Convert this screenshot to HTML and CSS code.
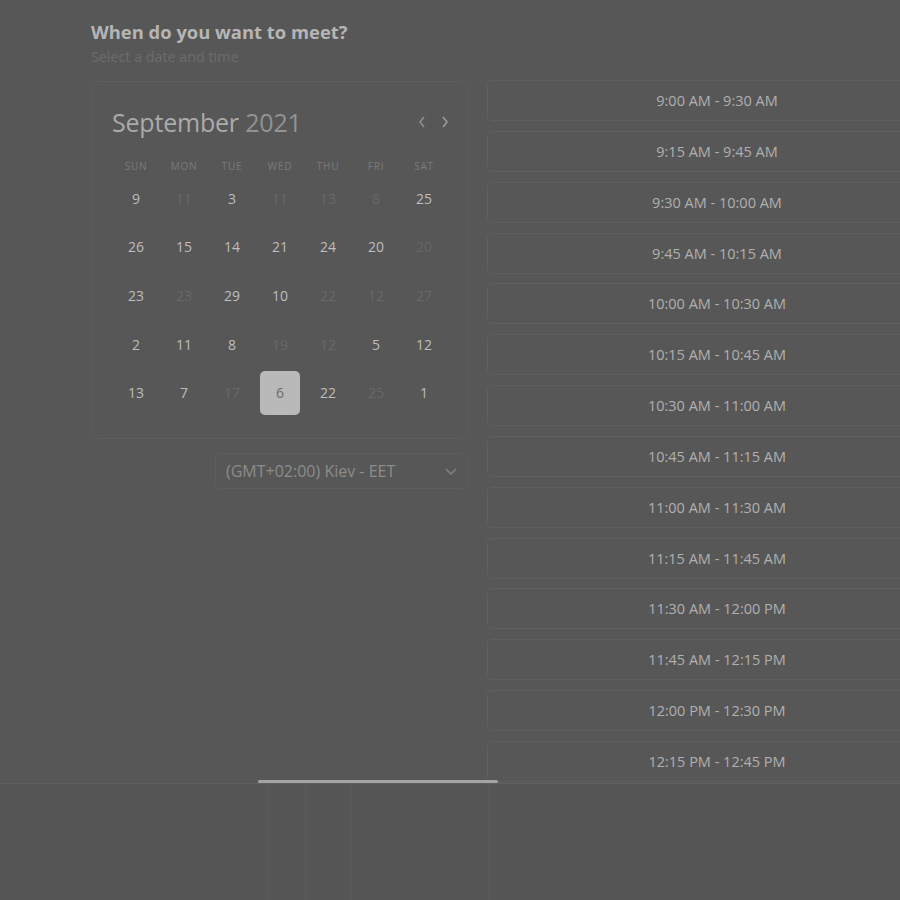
FILE: index.html
```html
<!DOCTYPE html>
<html>
<head>
<meta charset="utf-8">
<link rel="stylesheet" href="styles.css">
</head>
<body>
<div class="viewport">
  <div class="page">
    <h1 class="title">When do you want to meet?</h1>
    <p class="subtitle">Select a date and time</p>
    <div class="columns">
      <div class="left">
        <div class="calendar">
          <div class="cal-head">
            <div class="month"><span class="m">September</span> <span class="y">2021</span></div>
            <div class="nav">
              <svg width="10" height="14" viewBox="0 0 10 14"><path d="M7 2 L3 7 L7 12" fill="none" stroke="#8f8f8f" stroke-width="1.6"/></svg>
              <svg width="10" height="14" viewBox="0 0 10 14"><path d="M3 2 L7 7 L3 12" fill="none" stroke="#9a9a9a" stroke-width="1.6"/></svg>
            </div>
          </div>
          <div class="grid">
            <div class="dow">SUN</div><div class="dow">MON</div><div class="dow">TUE</div><div class="dow">WED</div><div class="dow">THU</div><div class="dow">FRI</div><div class="dow">SAT</div>
            <div class="d">9</div><div class="d off">11</div><div class="d">3</div><div class="d off">11</div><div class="d off">13</div><div class="d off">8</div><div class="d">25</div>
            <div class="d">26</div><div class="d">15</div><div class="d">14</div><div class="d">21</div><div class="d">24</div><div class="d">20</div><div class="d off">20</div>
            <div class="d">23</div><div class="d off">23</div><div class="d">29</div><div class="d">10</div><div class="d off">22</div><div class="d off">12</div><div class="d off">27</div>
            <div class="d">2</div><div class="d">11</div><div class="d">8</div><div class="d off">19</div><div class="d off">12</div><div class="d">5</div><div class="d">12</div>
            <div class="d">13</div><div class="d">7</div><div class="d off">17</div><div class="d"><span class="sel">6</span></div><div class="d">22</div><div class="d off">25</div><div class="d">1</div>
          </div>
        </div>
        <div class="tz">
          <span>(GMT+02:00) Kiev - EET</span>
          <svg width="14" height="10" viewBox="0 0 14 10"><path d="M2 3 L7 8 L12 3" fill="none" stroke="#858585" stroke-width="1.4"/></svg>
        </div>
      </div>
      <div class="slots">
        <div class="slot">9:00 AM - 9:30 AM</div>
        <div class="slot">9:15 AM - 9:45 AM</div>
        <div class="slot">9:30 AM - 10:00 AM</div>
        <div class="slot">9:45 AM - 10:15 AM</div>
        <div class="slot">10:00 AM - 10:30 AM</div>
        <div class="slot">10:15 AM - 10:45 AM</div>
        <div class="slot">10:30 AM - 11:00 AM</div>
        <div class="slot">10:45 AM - 11:15 AM</div>
        <div class="slot">11:00 AM - 11:30 AM</div>
        <div class="slot">11:15 AM - 11:45 AM</div>
        <div class="slot">11:30 AM - 12:00 PM</div>
        <div class="slot">11:45 AM - 12:15 PM</div>
        <div class="slot">12:00 PM - 12:30 PM</div>
        <div class="slot">12:15 PM - 12:45 PM</div>
      </div>
    </div>
  </div>
  <div class="thumb"></div>
</div>
<div class="footer">
  <div class="fcol c1"></div>
  <div class="fcol c2"></div>
  <div class="fcol c3"></div>
  <div class="fcol c4"></div>
</div>
</body>
</html>
```
FILE: styles.css
```css
html, body {
  margin: 0;
  padding: 0;
  background: #575757;
  overflow: hidden;
  width: 900px;
  height: 900px;
  font-family: "Open Sans", "Noto Sans", sans-serif;
}
.viewport {
  position: relative;
  height: 783px;
  border-bottom: 1px solid #5f5f5f;
  overflow: hidden;
}
.page {
  padding: 19px 0 0 91px;
}
.title {
  margin: 0;
  font-size: 18.4px;
  font-weight: 700;
  color: #b5b5b5;
  line-height: 25px;
}
.subtitle {
  margin: 3px 0 0;
  font-size: 14.3px;
  color: #6c6c6c;
  line-height: 20px;
}
.columns {
  display: flex;
  gap: 19px;
  margin-top: 12px;
  align-items: flex-start;
}
.left {
  width: 377px;
  flex: none;
  display: flex;
  flex-direction: column;
  align-items: flex-end;
  margin-top: 2px;
}
.calendar {
  border: 1px solid #5d5d5d;
  border-radius: 6px;
  padding: 18px 19px 21px 20px;
  box-sizing: content-box;
  width: 336px;
}
.cal-head {
  display: flex;
  align-items: center;
  justify-content: space-between;
  height: 44px;
  margin-bottom: 11px;
}
.month {
  font-size: 25px;
  font-weight: 400;
  line-height: 44px;
  letter-spacing: -0.2px;
}
.month .m { color: #ababab; }
.month .y { color: #939393; }
.nav {
  display: flex;
  gap: 13px;
  margin-right: -2px;
}
.grid {
  display: grid;
  grid-template-columns: repeat(7, 48px);
  grid-template-rows: 19px;
  grid-auto-rows: 48.6px;
}
.grid .dow {
  height: 19px;
  font-size: 10px;
  letter-spacing: 0.8px;
  color: #7a7a7a;
  text-align: center;
  line-height: 22px;
}
.d {
  display: flex;
  align-items: center;
  justify-content: center;
  font-size: 14px;
  color: #bdbdbd;
}
.d.off { color: #686868; }
.sel {
  width: 40px;
  height: 44px;
  border-radius: 5px;
  background: #b9b9b9;
  color: #6a6a6a;
  display: flex;
  align-items: center;
  justify-content: center;
}
.tz {
  margin-top: 14px;
  width: 232px;
  height: 34px;
  border: 1px solid #5d5d5d;
  border-radius: 5px;
  display: flex;
  align-items: center;
  justify-content: space-between;
  padding: 0 9px 0 10px;
  font-size: 16px;
  color: #8c8c8c;
}
.slots {
  display: flex;
  flex-direction: column;
  gap: 9.85px;
  margin-top: 1px;
}
.slot {
  width: 458px;
  height: 39px;
  border: 1px solid #5f5f5f;
  border-radius: 5px;
  display: flex;
  align-items: center;
  justify-content: center;
  font-size: 14.5px;
  font-weight: 500;
  color: #b0b0b0;
}
.thumb {
  position: absolute;
  left: 258px;
  top: 780px;
  width: 240px;
  height: 3px;
  border-radius: 2px;
  background: #a3a3a3;
}
.footer {
  display: flex;
  height: 116px;
  background: #565656;
}
.fcol { border-right: 1px solid #5a5a5a; }
.c1 { width: 268px; }
.c2 { width: 36px; }
.c3 { width: 45px; }
.c4 { width: 136px; }
```
